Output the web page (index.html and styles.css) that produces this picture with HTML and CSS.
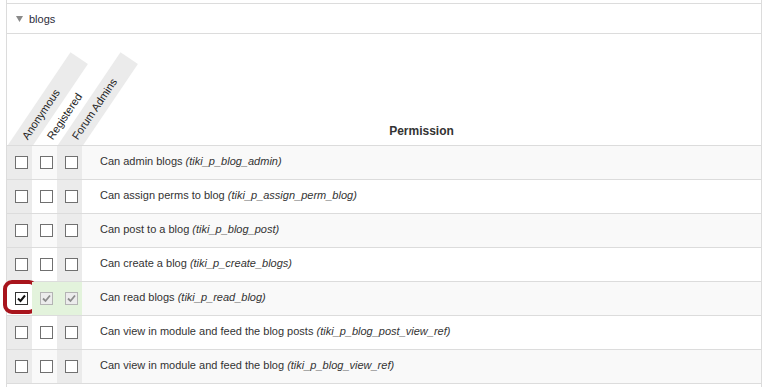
FILE: index.html
```html
<!DOCTYPE html>
<html lang="en">
<head>
  <meta charset="UTF-8">
  <title>Permissions - blogs</title>
  <link rel="stylesheet" href="styles.css">
</head>
<body>
  <div class="panel">
    <div class="panel-top"></div>
    <div class="section-title">
      <svg class="caret" width="7" height="6" viewBox="0 0 7 6"><polygon points="0,0 7,0 3.5,6" fill="#8a8a8a"/></svg>
      <span>blogs</span>
    </div>

    <div class="perm-head">
      <!-- rotated group labels -->
      <div class="group-label group-1 shaded"><span>Anonymous</span></div>
      <div class="group-label group-2"><span>Registered</span></div>
      <div class="group-label group-3 shaded"><span>Forum Admins</span></div>
      <div class="head-spacer"></div>
      <div class="head-title">Permission</div>
    </div>

    <div class="perm-body">
      <div class="perm-row">
        <div class="cell shade"><span class="cb"></span></div>
        <div class="cell"><span class="cb"></span></div>
        <div class="cell shade"><span class="cb"></span></div>
        <div class="perm-name"><span>Can admin blogs <em>(tiki_p_blog_admin)</em></span></div>
      </div>
      <div class="perm-row">
        <div class="cell shade"><span class="cb"></span></div>
        <div class="cell"><span class="cb"></span></div>
        <div class="cell shade"><span class="cb"></span></div>
        <div class="perm-name"><span>Can assign perms to blog <em>(tiki_p_assign_perm_blog)</em></span></div>
      </div>
      <div class="perm-row">
        <div class="cell shade"><span class="cb"></span></div>
        <div class="cell"><span class="cb"></span></div>
        <div class="cell shade"><span class="cb"></span></div>
        <div class="perm-name"><span>Can post to a blog <em>(tiki_p_blog_post)</em></span></div>
      </div>
      <div class="perm-row">
        <div class="cell shade"><span class="cb"></span></div>
        <div class="cell"><span class="cb"></span></div>
        <div class="cell shade"><span class="cb"></span></div>
        <div class="perm-name"><span>Can create a blog <em>(tiki_p_create_blogs)</em></span></div>
      </div>
      <div class="perm-row">
        <div class="cell granted">
          <span class="cb checked"><svg width="11" height="11" viewBox="0 0 11 11"><polyline points="2,5.5 4.5,8 9,2.5" fill="none" stroke="#111" stroke-width="2"/></svg></span>
          <span class="ring"></span>
        </div>
        <div class="cell inherited"><span class="cb disabled"><svg width="11" height="11" viewBox="0 0 11 11"><polyline points="2,5.5 4.5,8 9,2.5" fill="none" stroke="#8c8c8c" stroke-width="1.8"/></svg></span></div>
        <div class="cell inherited"><span class="cb disabled"><svg width="11" height="11" viewBox="0 0 11 11"><polyline points="2,5.5 4.5,8 9,2.5" fill="none" stroke="#8c8c8c" stroke-width="1.8"/></svg></span></div>
        <div class="perm-name"><span>Can read blogs <em>(tiki_p_read_blog)</em></span></div>
      </div>
      <div class="perm-row">
        <div class="cell shade"><span class="cb"></span></div>
        <div class="cell"><span class="cb"></span></div>
        <div class="cell shade"><span class="cb"></span></div>
        <div class="perm-name"><span>Can view in module and feed the blog posts <em>(tiki_p_blog_post_view_ref)</em></span></div>
      </div>
      <div class="perm-row">
        <div class="cell shade"><span class="cb"></span></div>
        <div class="cell"><span class="cb"></span></div>
        <div class="cell shade"><span class="cb"></span></div>
        <div class="perm-name"><span>Can view in module and feed the blog <em>(tiki_p_blog_view_ref)</em></span></div>
      </div>
    </div>
  </div>
</body>
</html>
```

FILE: styles.css
```css
* { box-sizing: border-box; }
body {
  margin: 0;
  background: #fff;
  color: #333;
  font-family: "Liberation Sans", Arial, sans-serif;
  font-size: 11px;
}
.panel {
  margin-left: 6px;
  width: 756px;
  height: 387px;
  border-left: 1px solid #dcdcdc;
  border-right: 1px solid #dcdcdc;
}
.panel-top {
  height: 4px;
  border-bottom: 1px solid #dcdcdc;
}
/* section toggle */
.section-title {
  height: 30px;
  display: flex;
  align-items: center;
  gap: 6px;
  padding-left: 9px;
  border-bottom: 1px solid #dcdcdc;
  color: #2b2b3a;
}
.caret { display: block; margin-top: 1px; }

/* header with slanted group names */
.perm-head {
  position: relative;
  overflow: hidden;
  height: 112px;
  display: grid;
  grid-template-columns: 75px 1fr;
  border-bottom: 1px solid #dcdcdc;
}
.group-label {
  position: absolute;
  bottom: -11.6px;
  width: 112px;
  height: 20.7px;
  line-height: 20.7px;
  padding-left: 15px;
  white-space: nowrap;
  color: #1e1e1e;
  transform-origin: 0 100%;
  transform: rotate(-56deg);
}
.group-label.shaded { background: #ebebeb; }
.group-1 { left: 18px; }
.group-2 { left: 43px; }
.group-3 { left: 68px; }
.head-title {
  align-self: end;
  padding-bottom: 7px;
  text-align: center;
  font-size: 12px;
  font-weight: bold;
  line-height: 14px;
}

/* permission rows */
.perm-row {
  height: 34px;
  display: grid;
  grid-template-columns: 25px 25px 25px 1fr;
  border-bottom: 1px solid #dcdcdc;
}
.perm-row:nth-child(odd) { background: #f9f9f9; }
.cell {
  position: relative;
  padding: 10px 0 0 8px;
}
.cell.shade { background: #ebebeb; }
.cell.granted { background: #fff; }
.cell.inherited { background: #e3f3dc; }
.perm-name {
  display: flex;
  align-items: center;
  padding: 0 0 4px 18px;
  white-space: nowrap;
}
.perm-name em { font-style: italic; }

/* checkboxes */
.cb {
  display: block;
  width: 13px;
  height: 13px;
  border: 1px solid #707070;
  background: #fff;
}
.cb svg { display: block; }
.cb.checked { border-color: #333; }
.cb.disabled { border-color: #b4b4b4; background: #ececec; }

/* annotation ring */
.ring {
  position: absolute;
  left: -4px;
  top: -2px;
  width: 35px;
  height: 34px;
  border: 4px solid #a8141c;
  border-radius: 9px;
}
```
